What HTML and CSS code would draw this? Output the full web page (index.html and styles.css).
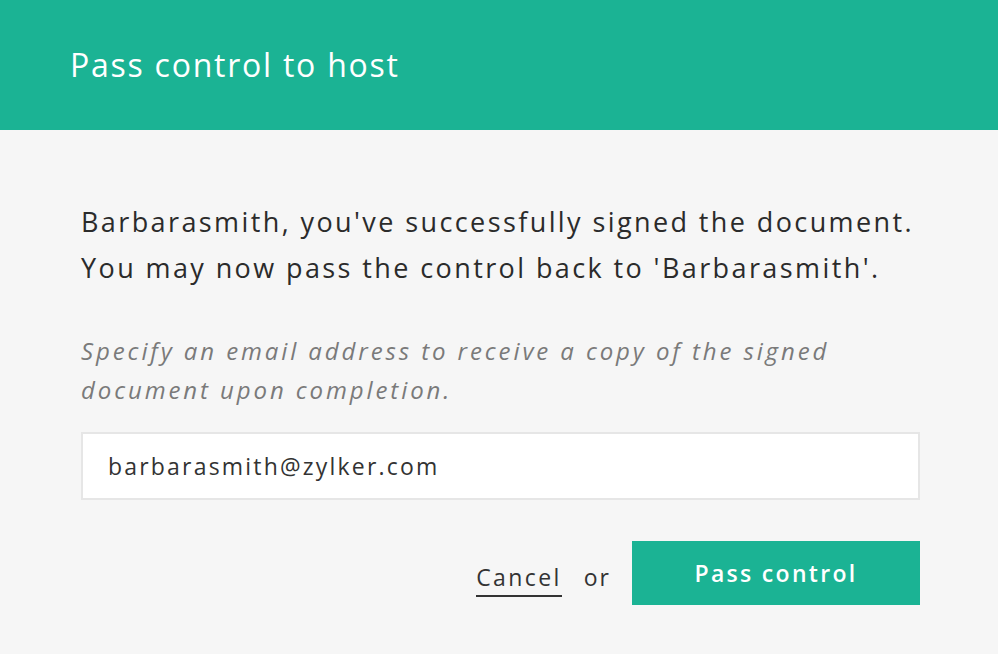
FILE: index.html
```html
<!DOCTYPE html>
<html>
<head>
<meta charset="utf-8">
<link rel="stylesheet" href="styles.css">
</head>
<body>
<div class="dialog">
  <header class="head">
    <h1 class="title">Pass control to host</h1>
  </header>
  <main class="body">
    <p class="msg">Barbarasmith, you've successfully signed the document.<br>You may now pass the control back to 'Barbarasmith'.</p>
    <p class="hint">Specify an email address to receive a copy of the signed<br>document upon completion.</p>
    <div class="field">barbarasmith@zylker.com</div>
    <div class="actions">
      <span class="cancel">Cancel</span>
      <span class="or">or</span>
      <button class="btn">Pass control</button>
    </div>
  </main>
</div>
</body>
</html>
```
FILE: styles.css
```css
html, body {
  margin: 0;
  padding: 0;
  background: #f6f6f6;
}
body {
  width: 998px;
  height: 654px;
  overflow: hidden;
  font-family: "Open Sans", sans-serif;
  color: #333;
}
.head {
  background: #1bb394;
  height: 130px;
  display: flex;
  align-items: center;
  padding-left: 70px;
}
.title {
  margin: 0;
  color: #fff;
  font-weight: 400;
  font-size: 32px;
  letter-spacing: 1.75px;
  padding-bottom: 2px;
}
.body {
  padding: 0 78px 0 81px;
}
.msg {
  margin: 0;
  padding-top: 69px;
  font-size: 27px;
  line-height: 46px;
  letter-spacing: 2.4px;
  color: #2b2b2b;
  white-space: nowrap;
}
.hint {
  margin: 40px 0 0;
  font-style: italic;
  font-size: 24px;
  line-height: 39px;
  letter-spacing: 2.9px;
  color: #7a7a7a;
  white-space: nowrap;
}
.field {
  margin-top: 23px;
  box-sizing: border-box;
  height: 68px;
  background: #fff;
  border: 2px solid #e6e6e6;
  display: flex;
  align-items: center;
  padding-left: 25px;
  font-size: 23px;
  letter-spacing: 2.2px;
  color: #333;
}
.actions {
  margin-top: 41px;
  display: flex;
  justify-content: flex-end;
  align-items: center;
}
.cancel {
  font-size: 23px;
  letter-spacing: 2.4px;
  color: #333;
  border-bottom: 2px solid #333;
  padding-top: 12px;
  padding-bottom: 2px;
}
.or {
  font-size: 23px;
  letter-spacing: 2px;
  margin: 0 21px 0 22px;
  padding-top: 8px;
  color: #333;
}
.btn {
  width: 288px;
  height: 64px;
  border: 0;
  background: #1bb394;
  color: #fff;
  font-family: "Open Sans", sans-serif;
  font-weight: 600;
  font-size: 23px;
  letter-spacing: 2.3px;
}
```
